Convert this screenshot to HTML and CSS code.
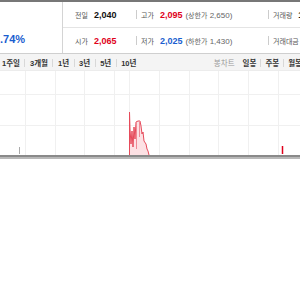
FILE: index.html
```html
<!DOCTYPE html>
<html>

<head>
	<meta charset="utf-8">
	<link rel="stylesheet" href="styles.css">
</head>

<body>
	<div class="quote">
		<div class="rate"><span class="rate-num">.74%</span></div>
		<div class="table">
			<div class="row">
				<div class="cell c1"><span class="lbl">전일</span><b class="num">2,040</b></div>
				<div class="cell c2"><span class="lbl">고가</span><b class="num up">2,095</b><span class="sub">(<span class="lbl-s">상한가</span> 2,650)</span></div>
				<div class="cell c3"><span class="lbl">거래량</span><b class="num">1</b></div>
			</div>
			<div class="row">
				<div class="cell c1"><span class="lbl">시가</span><b class="num up">2,065</b></div>
				<div class="cell c2"><span class="lbl">저가</span><b class="num down">2,025</b><span class="sub">(<span class="lbl-s">하한가</span> 1,430)</span></div>
				<div class="cell c3"><span class="lbl">거래대금</span><b class="num">4</b></div>
			</div>
		</div>
	</div>

	<div class="tabs">
		<div class="periods">
			<span class="tab">1주일</span><span class="sep"></span>
			<span class="tab">3개월</span><span class="sep"></span>
			<span class="tab">1년</span><span class="sep"></span>
			<span class="tab">3년</span><span class="sep"></span>
			<span class="tab">5년</span><span class="sep"></span>
			<span class="tab">10년</span>
		</div>
		<div class="kinds">
			<span class="tab off">봉차트</span>
			<span class="tab">일봉</span><span class="sep"></span>
			<span class="tab">주봉</span><span class="sep"></span>
			<span class="tab">월봉</span>
		</div>
	</div>

	<div class="chart">
		<svg width="300" height="84" viewBox="0 0 300 84">
			<!-- grid -->
			<g stroke="#f0f0f0" stroke-width="1">
				<line x1="0" y1="23.5" x2="300" y2="23.5" />
				<line x1="0" y1="54.5" x2="300" y2="54.5" />
				<line x1="25.5" y1="0" x2="25.5" y2="84" />
				<line x1="55.5" y1="0" x2="55.5" y2="84" />
				<line x1="84.5" y1="0" x2="84.5" y2="84" />
				<line x1="114.5" y1="0" x2="114.5" y2="84" />
				<line x1="129.5" y1="0" x2="129.5" y2="84" />
				<line x1="159.5" y1="0" x2="159.5" y2="84" />
				<line x1="189.5" y1="0" x2="189.5" y2="84" />
				<line x1="218.5" y1="0" x2="218.5" y2="84" />
				<line x1="248.5" y1="0" x2="248.5" y2="84" />
				<line x1="278.5" y1="0" x2="278.5" y2="84" />
			</g>
			<!-- price area -->
			<polygon fill="#fde1e4"
				points="129,84 129,41 130,58 131,73 132,60 133,76 134,56 135,68 136,51 138,50 140,50 141,55 142,63 143,61 144,70 146,73 147,78 148,80 149,84" />
			<polyline fill="none" stroke="#e64a5a" stroke-width="1"
				points="129.5,84 129.5,41 130,58 131,73 132,60 133,76 134,56 135,68 136,51 138,50 140,50 141,55 142,63 143,61 144,70 146,73 147,78 148,80 149,84" />
			<line x1="136.5" y1="51" x2="136.5" y2="78" stroke="#ef8a95" />
			<line x1="139.5" y1="50" x2="139.5" y2="66" stroke="#ef8a95" />
			<line x1="19.5" y1="76" x2="19.5" y2="83" stroke="#aaa" />
			<line x1="282.5" y1="75" x2="282.5" y2="83" stroke="#e0001b" stroke-width="1.5" />
		</svg>
		<div class="axis"></div>
	</div>
</body>

</html>
```

FILE: styles.css
```css
body {
	margin: 0;
	width: 300px;
	overflow: hidden;
	background: #fff;
	color: #222;
	font-family: "Liberation Sans", "Noto Sans CJK KR", sans-serif;
	font-size: 9px;
}

.quote {
	display: flex;
	height: 51px;
	border-top: 2px solid #777;
}

.rate {
	width: 63px;
	flex: none;
	border-right: 1px solid #d4d4d4;
	padding-top: 31px;
	box-sizing: border-box;
}

.rate-num {
	color: #1a5ecf;
	font-size: 11px;
	font-weight: bold;
}

.table {
	flex: 1;
	display: flex;
	flex-direction: column;
}

.row {
	flex: 1;
	display: flex;
	align-items: center;
	padding-left: 12px;
	white-space: nowrap;
}

.row + .row {
	border-top: 1px solid #e4e4e4;
}

.cell {
	display: flex;
	align-items: center;
}

.c1 {
	width: 61px;
}

.c2 {
	width: 132px;
}

.c2::before,
.c3::before {
	content: "";
	width: 1px;
	height: 9px;
	margin-right: 4px;
	background: #ccc;
}

.lbl {
	color: #555;
	font-size: 7px;
	margin-right: 6px;
}

.lbl-s {
	font-size: 7px;
}

.num {
	color: #111;
	font-size: 9px;
}

.up {
	color: #e0001b;
}

.down {
	color: #1a5ecf;
}

.sub {
	color: #666;
	font-size: 8px;
	margin-left: 3px;
}

.tabs {
	display: flex;
	justify-content: space-between;
	align-items: center;
	height: 18px;
	background: #f4f4f4;
	border-top: 1px solid #cfcfcf;
	border-bottom: 1px solid #ececec;
	padding-left: 2px;
	padding-top: 1px;
	box-sizing: border-box;
	white-space: nowrap;
}

.periods,
.kinds {
	display: flex;
	align-items: center;
	gap: 4px;
}

.periods {
	gap: 4.5px;
}

.kinds {
	margin-right: -2px;
}

.tab {
	color: #333;
	font-weight: bold;
	font-size: 7.5px;
}

.tab.off {
	color: #999;
	font-weight: normal;
	margin-right: 4px;
}

.sep {
	width: 1px;
	height: 8px;
	background: #d8d8d8;
}

.chart svg {
	display: block;
}

.axis {
	height: 2px;
	background: #8a8a8a;
	border-bottom: 2px solid #b8b8b8;
}
```
